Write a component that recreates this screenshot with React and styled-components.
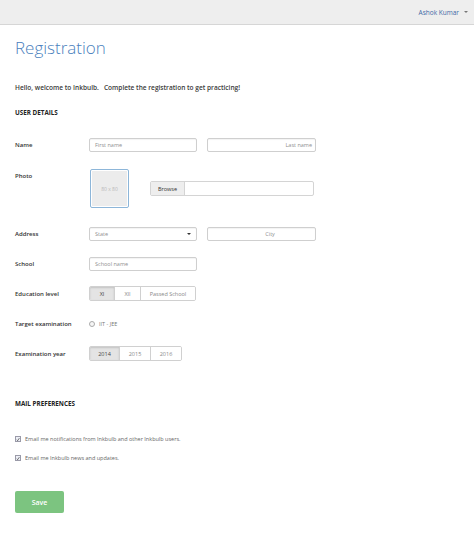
import React from "react";
import styled, { createGlobalStyle } from "styled-components";

const Global = createGlobalStyle`
  html, body { margin: 0; padding: 0; background: #fff; }
  body { font-family: "Open Sans", "Noto Sans", sans-serif; color: #333; }
  * { box-sizing: border-box; }
`;

const Page = styled.div`
  width: 474px;
  min-height: 547px;
  background: #fff;
`;

const TopBar = styled.div`
  height: 25px;
  background: #eeeeee;
  border-bottom: 1px solid #d6d6d6;
  display: flex;
  align-items: center;
  justify-content: flex-end;
  padding-right: 6px;
`;

const UserMenu = styled.div`
  display: flex;
  align-items: center;
  gap: 5px;
  font-size: 6.5px;
  color: #3f6aa6;
`;

const Caret = styled.span`
  width: 0;
  height: 0;
  border-left: 2px solid transparent;
  border-right: 2px solid transparent;
  border-top: 2px solid #777;
`;

const Content = styled.div`
  padding: 0 15px;
`;

const Title = styled.h1`
  margin: 11px 0 0;
  font-size: 17px;
  font-weight: 300;
  color: #4a7fbd;
  line-height: 24px;
`;

const Welcome = styled.p`
  margin: 23px 0 0;
  font-size: 6.55px;
  font-weight: 600;
  color: #3a3a3a;
`;

const SectionHead = styled.h2`
  margin: ${(p) => p.$top}px 0 0;
  font-size: 6.3px;
  font-weight: 700;
  color: #222;
  text-transform: uppercase;
`;

const Rows = styled.div`
  margin-top: 20px;
  display: flex;
  flex-direction: column;
`;

const Row = styled.div`
  display: grid;
  grid-template-columns: 74px 1fr;
  align-items: ${(p) => (p.$top ? "start" : "center")};
  min-height: 15px;
  margin-bottom: ${(p) => p.$gap ?? 15}px;
`;

const Label = styled.div`
  font-size: 6px;
  font-weight: 600;
  color: #333;
  padding-top: ${(p) => p.$pad || 0}px;
`;

const Fields = styled.div`
  display: flex;
  align-items: center;
  gap: ${(p) => p.$gap ?? 10}px;
`;

const Input = styled.div`
  width: ${(p) => p.$w || 108}px;
  height: ${(p) => p.$h || 14}px;
  border: 1px solid #cfcfcf;
  border-radius: 2px;
  box-shadow: inset 0 1px 1px rgba(0, 0, 0, 0.05);
  background: #fff;
  display: flex;
  align-items: center;
  justify-content: ${(p) => (p.$right ? "flex-end" : p.$center ? "center" : "space-between")};
  padding: 0 ${(p) => (p.$right ? 3 : 5)}px;
  font-size: 5.5px;
  color: #8f8f8f;
`;

const SelectCaret = styled.span`
  width: 0;
  height: 0;
  border-left: 2px solid transparent;
  border-right: 2px solid transparent;
  border-top: 2.5px solid #333;
`;

const PhotoBox = styled.div`
  width: 39px;
  height: 39px;
  margin-left: 1px;
  border: 1px solid #8db6d9;
  border-radius: 2px;
  padding: 1px;
  background: #fff;
`;

const PhotoInner = styled.div`
  width: 100%;
  height: 100%;
  background: #ececec;
  display: flex;
  align-items: center;
  justify-content: center;
  font-size: 5px;
  color: #b9b9b9;
`;

const FileInput = styled.div`
  margin-left: 21px;
  width: 164px;
  height: 15px;
  border: 1px solid #d4d4d4;
  border-radius: 2px;
  display: flex;
  overflow: hidden;
`;

const BrowseBtn = styled.div`
  width: 34px;
  background: #eeeeee;
  border-right: 1px solid #d4d4d4;
  display: flex;
  align-items: center;
  justify-content: center;
  font-size: 5.5px;
  color: #333;
`;

const Group = styled.div`
  display: flex;
  height: 15px;
  border: 1px solid #d0d0d0;
  border-radius: 2px;
  overflow: hidden;
`;

const Seg = styled.div`
  width: ${(p) => p.$w}px;
  display: flex;
  align-items: center;
  justify-content: center;
  font-size: 5.5px;
  color: ${(p) => (p.$active ? "#444" : "#888")};
  background: ${(p) => (p.$active ? "#e4e4e4" : "#fff")};
  box-shadow: ${(p) => (p.$active ? "inset 0 1px 2px rgba(0,0,0,0.15)" : "none")};
  & + & { border-left: 1px solid #d0d0d0; }
`;

const Radio = styled.span`
  width: 6px;
  height: 6px;
  border-radius: 50%;
  border: 1px solid #aaa;
  background: #f6f6f6;
`;

const RadioText = styled.span`
  font-size: 5.5px;
  color: #777;
  margin-left: 4px;
`;

const Checks = styled.div`
  margin-top: 27px;
  display: flex;
  flex-direction: column;
  gap: 11px;
`;

const Check = styled.label`
  display: flex;
  align-items: center;
  gap: 4px;
  font-size: 5.5px;
  color: #666;
`;

const Box = styled.span`
  width: 6px;
  height: 6px;
  border: 1px solid #9a9aa8;
  background: #eef0f7;
  display: flex;
  align-items: center;
  justify-content: center;
`;

const SaveBtn = styled.button`
  margin-top: 29px;
  width: 49px;
  height: 22px;
  border: none;
  border-radius: 2px;
  background: #7cc480;
  color: #fff;
  font-family: inherit;
  font-size: 7px;
  font-weight: 600;
  padding: 0;
`;

function Tick() {
  return (
    <svg width="5" height="5" viewBox="0 0 10 10">
      <path d="M2 5.5 L4 8 L8.5 1.5" fill="none" stroke="#333" strokeWidth="1.6" />
    </svg>
  );
}

export default function App() {
  return (
    <Page>
      <Global />
      <TopBar>
        <UserMenu>
          Ashok Kumar <Caret />
        </UserMenu>
      </TopBar>
      <Content>
        <Title>Registration</Title>
        <Welcome>Hello, welcome to Inkbulb.&nbsp;&nbsp; Complete the registration to get practicing!</Welcome>
        <SectionHead $top={16}>User details</SectionHead>

        <Rows>
          <Row $gap={17}>
            <Label>Name</Label>
            <Fields>
              <Input>First name</Input>
              <Input $right $w={109}>Last name</Input>
            </Fields>
          </Row>
          <Row $top $gap={18}>
            <Label $pad={3}>Photo</Label>
            <Fields $gap={0}>
              <PhotoBox>
                <PhotoInner>80 x 80</PhotoInner>
              </PhotoBox>
              <FileInput>
                <BrowseBtn>Browse</BrowseBtn>
              </FileInput>
            </Fields>
          </Row>
          <Row>
            <Label>Address</Label>
            <Fields>
              <Input>
                State <SelectCaret />
              </Input>
              <Input $w={109} $center>
                &nbsp;&nbsp;&nbsp;&nbsp;&nbsp;&nbsp;&nbsp;&nbsp;&nbsp;&nbsp;&nbsp;&nbsp;City
              </Input>
            </Fields>
          </Row>
          <Row>
            <Label>School</Label>
            <Fields>
              <Input>School name</Input>
            </Fields>
          </Row>
          <Row>
            <Label>Education level</Label>
            <Fields>
              <Group>
                <Seg $w={24} $active>XI</Seg>
                <Seg $w={26}>XII</Seg>
                <Seg $w={55}>Passed School</Seg>
              </Group>
            </Fields>
          </Row>
          <Row>
            <Label>Target examination</Label>
            <Fields $gap={0}>
              <Radio />
              <RadioText>IIT - JEE</RadioText>
            </Fields>
          </Row>
          <Row $gap={0}>
            <Label>Examination year</Label>
            <Fields>
              <Group>
                <Seg $w={29} $active>2014</Seg>
                <Seg $w={31}>2015</Seg>
                <Seg $w={31}>2016</Seg>
              </Group>
            </Fields>
          </Row>
        </Rows>

        <SectionHead $top={38}>Mail preferences</SectionHead>
        <Checks>
          <Check>
            <Box><Tick /></Box>
            Email me notifications from Inkbulb and other Inkbulb users.
          </Check>
          <Check>
            <Box><Tick /></Box>
            Email me Inkbulb news and updates.
          </Check>
        </Checks>
        <SaveBtn>Save</SaveBtn>
      </Content>
    </Page>
  );
}
